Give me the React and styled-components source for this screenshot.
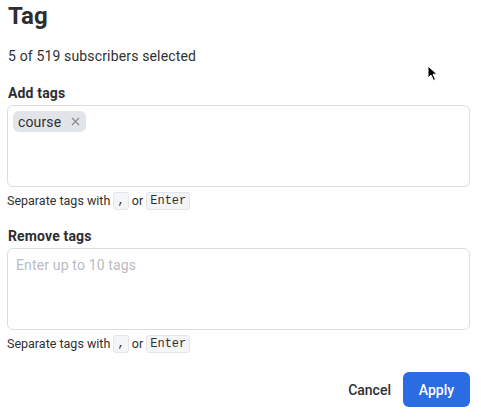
import React from "react";
import styled, { createGlobalStyle } from "styled-components";

const Global = createGlobalStyle`
  html, body { margin: 0; padding: 0; background: #fff; }
  body { font-family: Roboto, "Liberation Sans", Arial, sans-serif; color: #2f3033; }
  * { box-sizing: border-box; }
`;

const Dialog = styled.div`
  position: relative;
  width: 481px;
  height: 417px;
  padding: 2px 11px 0 7px;
  display: flex;
  flex-direction: column;
`;

const Title = styled.h1`
  margin: 0 0 0 1px;
  font-size: 24px;
  line-height: 28px;
  font-weight: 700;
  color: #2d2e31;
`;

const Subtitle = styled.p`
  margin: 18px 0 0 1px;
  font-size: 14px;
  letter-spacing: 0.15px;
  line-height: 17px;
  color: #2f3033;
`;

const Label = styled.div`
  margin: ${(p) => p.$top}px 0 0 1px;
  font-size: 14px;
  letter-spacing: 0.15px;
  line-height: 17px;
  font-weight: 700;
  color: #2d2e31;
`;

const Field = styled.div`
  margin-top: 3px;
  height: 82px;
  border: 1px solid #dcdde0;
  border-radius: 6px;
  padding: 5px 5px;
  display: flex;
  flex-wrap: wrap;
  align-content: flex-start;
  gap: 4px;
`;

const Chip = styled.span`
  display: inline-flex;
  align-items: center;
  height: 21px;
  padding: 0 6px 0 5px;
  background: #e1e4e9;
  border-radius: 6px;
  font-size: 14px;
  letter-spacing: 0.15px;
  color: #2f3033;
`;

const ChipX = styled.span`
  margin-left: 10px;
  display: inline-flex;
  color: #8a8f98;
`;

const Placeholder = styled.span`
  margin: 3px 0 0 3px;
  font-size: 14px;
  letter-spacing: 0.15px;
  line-height: 17px;
  color: #b9bcc3;
`;

const Hint = styled.div`
  margin-top: 5px;
  font-size: 12.5px;
  line-height: 18px;
  color: #2f3033;
  display: flex;
  align-items: center;
  white-space: pre;
`;

const Kbd = styled.kbd`
  font-family: "Liberation Mono", "Courier New", monospace;
  font-size: 12px;
  line-height: 14px;
  padding: 1px 3px;
  background: #f4f5f6;
  border: 1px solid #e4e5e8;
  border-radius: 3px;
  color: #2f3033;
`;

const Footer = styled.div`
  margin-top: 19px;
  display: flex;
  justify-content: flex-end;
  align-items: center;
  gap: 12px;
`;

const TextButton = styled.button`
  border: none;
  background: none;
  font-family: inherit;
  font-size: 14px;
  font-weight: 500;
  color: #2f3033;
  padding: 0;
  cursor: pointer;
`;

const PrimaryButton = styled.button`
  border: none;
  background: #2a6ce4;
  color: #fff;
  font-family: inherit;
  font-size: 14px;
  font-weight: 500;
  width: 67px;
  height: 35px;
  border-radius: 6px;
  cursor: pointer;
`;

const Cursor = styled.svg`
  position: absolute;
  left: 427px;
  top: 65px;
`;

function HintLine() {
  return (
    <Hint>
      Separate tags with <Kbd>,</Kbd> or <Kbd>Enter</Kbd>
    </Hint>
  );
}

export default function App() {
  return (
    <>
      <Global />
      <Dialog>
        <Title>Tag</Title>
        <Subtitle>5 of 519 subscribers selected</Subtitle>
        <Label $top={20}>Add tags</Label>
        <Field>
          <Chip>
            course
            <ChipX>
              <svg width="9" height="9" viewBox="0 0 9 9">
                <path d="M1 1L8 8M8 1L1 8" stroke="currentColor" strokeWidth="1.4" />
              </svg>
            </ChipX>
          </Chip>
        </Field>
        <HintLine />
        <Label $top={18}>Remove tags</Label>
        <Field>
          <Placeholder>Enter up to 10 tags</Placeholder>
        </Field>
        <HintLine />
        <Footer>
          <TextButton>Cancel</TextButton>
          <PrimaryButton>Apply</PrimaryButton>
        </Footer>
        <Cursor width="12" height="17" viewBox="0 0 12 17">
          <path d="M1 1L1 13L4 10L6.5 15.5L8.5 14.5L6 9.2L10 9.2Z" fill="#000" stroke="#fff" strokeWidth="1" />
        </Cursor>
      </Dialog>
    </>
  );
}
